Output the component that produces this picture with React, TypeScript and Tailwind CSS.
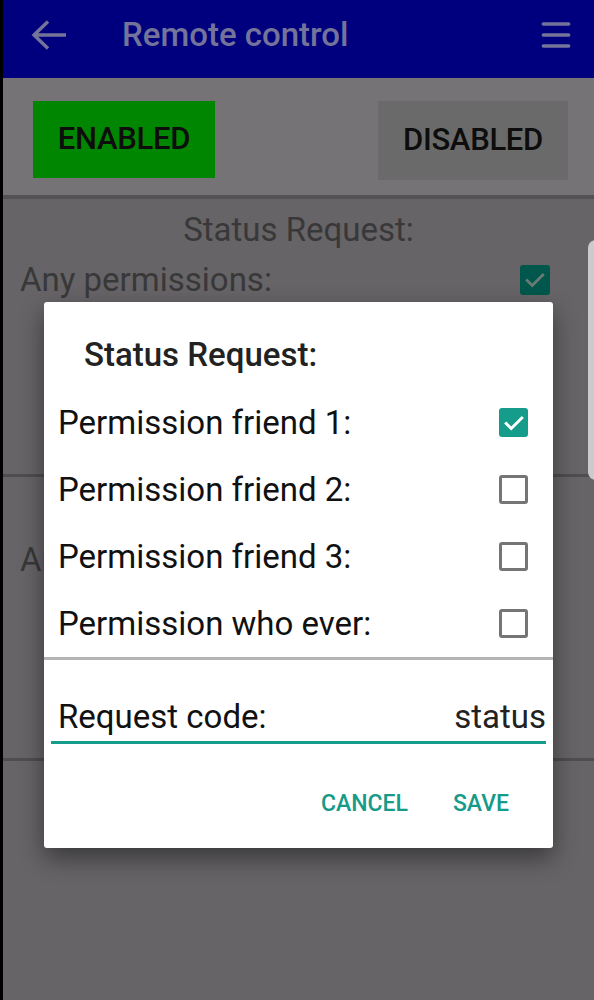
import { Menu } from "lucide-react";

const permissions = [
  { label: "Permission friend 1:", checked: true },
  { label: "Permission friend 2:", checked: false },
  { label: "Permission friend 3:", checked: false },
  { label: "Permission who ever:", checked: false },
];

function CheckBox({ checked }: { checked: boolean }) {
  if (checked) {
    return (
      <div className="grid size-[29px] place-items-center rounded-[3px] bg-[#169c8a]">
        <svg width="22" height="22" viewBox="0 0 24 24" fill="none">
          <path d="M3.5 12.5l5.5 5.5L20.5 6.5" stroke="#ffffff" strokeWidth="3.2" strokeLinecap="square" />
        </svg>
      </div>
    );
  }
  return <div className="size-[29px] rounded-[3px] border-[3px] border-[#757575]" />;
}

export default function App() {
  return (
    <div
      className="relative h-[1000px] w-[594px] overflow-hidden border-l-[3px] border-black bg-[#666467]"
      style={{ fontFamily: "Roboto, 'Noto Sans', sans-serif" }}
    >
      <header className="flex h-[78px] items-center bg-[#00007e] pb-[8px] pl-[27px] pr-[19px] text-[#74749a]">
        <svg width="38" height="32" viewBox="0 0 38 32" fill="none" stroke="currentColor" strokeWidth="3.4">
          <path d="M4 16h32M18 2.5L4 16l14 13.5" />
        </svg>
        <h1 className="ml-[54px] flex-1 text-[33px] font-medium">Remote control</h1>
        <Menu size={38} strokeWidth={2.2} />
      </header>

      <section className="flex h-[121px] items-start justify-between border-b-[4px] border-[#545254] bg-[#757375] pl-[30px] pr-[26px] pt-[23px]">
        <div className="flex h-[77px] w-[182px] items-center justify-center bg-[#008600] text-[31px] font-medium tracking-[-0.3px] text-[#0d0d0d]">
          ENABLED
        </div>
        <div className="flex h-[79px] w-[190px] items-center justify-center bg-[#6a6a6a] text-[31px] font-medium tracking-[-0.3px] text-[#0d0d0d]">
          DISABLED
        </div>
      </section>

      <section className="h-[278px] border-b-[3px] border-[#4f4d50] text-[#393839]">
        <p className="pt-[12px] text-center text-[33px] leading-[38px]">Status Request:</p>
        <div className="mt-[12px] flex items-center justify-between pl-[17px] pr-[44px]">
          <span className="text-[33px] leading-[38px]">Any permissions:</span>
          <div className="grid size-[30px] place-items-center rounded-[3px] bg-[#01574b]">
            <svg width="22" height="22" viewBox="0 0 24 24" fill="none">
              <path d="M3.5 12.5l5.5 5.5L20.5 6.5" stroke="#6a7a76" strokeWidth="3" strokeLinecap="square" />
            </svg>
          </div>
        </div>
      </section>

      <section className="h-[284px] border-b-[3px] border-[#4f4d50] pl-[17px] text-[#393839]">
        <p className="pt-[64px] text-[33px] leading-[38px]">Any permissions:</p>
      </section>

      <div className="absolute left-[585px] top-[240px] h-[240px] w-[12px] rounded-l-[8px] bg-[#cbcacc]" />

      <div className="absolute left-[41px] top-[302px] h-[546px] w-[509px] rounded-[3px] bg-white shadow-[0_10px_24px_rgba(0,0,0,0.45)]">
        <div className="h-[87px] pl-[40px] pt-[34px]">
          <h2 className="text-[33px] font-medium leading-[38px] text-[#222222]">Status Request:</h2>
        </div>
        {permissions.map((p) => (
          <div key={p.label} className="flex h-[67px] items-center justify-between pl-[14px] pr-[25px]">
            <span className="text-[33px] text-[#111111]">{p.label}</span>
            <CheckBox checked={p.checked} />
          </div>
        ))}
        <div className="h-[3px] bg-[#b4b4b4]" />
        <div className="mx-[7px] mt-[37px] flex items-center justify-between border-b-[3px] border-[#169c8a] pb-[4px] pl-[7px]">
          <span className="text-[33px] leading-[40px] text-[#111111]">Request code:</span>
          <span className="text-[33px] leading-[40px] text-[#222222]">status</span>
        </div>
        <div className="mt-[43px] flex justify-end gap-[45px] pr-[44px] text-[23px] font-medium text-[#169a89]">
          <span>CANCEL</span>
          <span>SAVE</span>
        </div>
      </div>
    </div>
  );
}
